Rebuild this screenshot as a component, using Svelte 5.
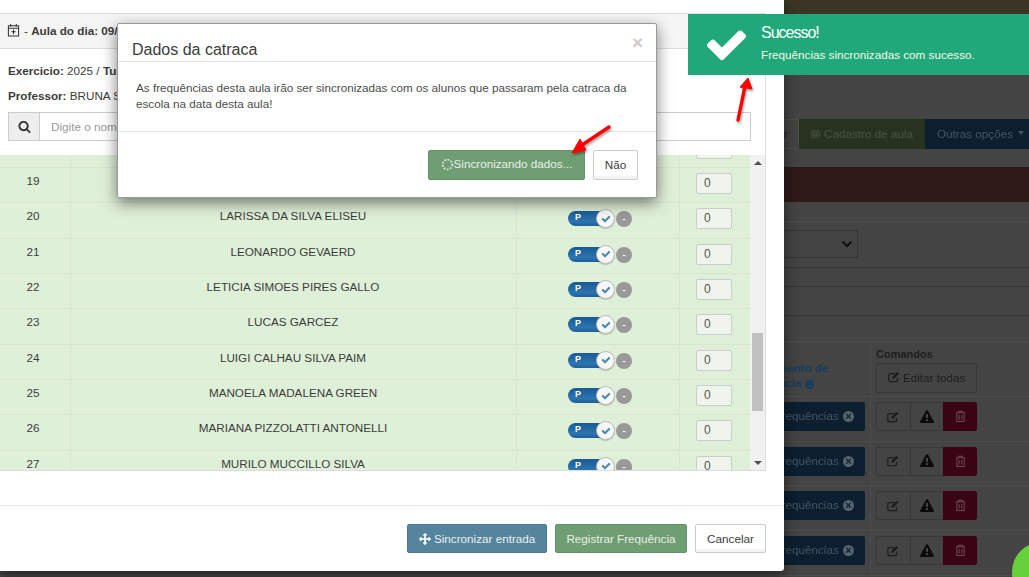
<script>
  const rows = [
    { n: 18, name: '' },
    { n: 19, name: '' },
    { n: 20, name: 'LARISSA DA SILVA ELISEU' },
    { n: 21, name: 'LEONARDO GEVAERD' },
    { n: 22, name: 'LETICIA SIMOES PIRES GALLO' },
    { n: 23, name: 'LUCAS GARCEZ' },
    { n: 24, name: 'LUIGI CALHAU SILVA PAIM' },
    { n: 25, name: 'MANOELA MADALENA GREEN' },
    { n: 26, name: 'MARIANA PIZZOLATTI ANTONELLI' },
    { n: 27, name: 'MURILO MUCCILLO SILVA' }
  ];
  const pageRows = [1, 2, 3, 4];

  const check = 'M1671 566q0-40-28-68l-136-136q-28-28-68-28t-68 28l-656 657-294-295q-28-28-68-28t-68 28l-136 136q-28 28-28 68t28 68l362 362 136 136q28 28 68 28t68-28l136-136 724-724q28-28 28-68z';
  const search = 'M1216 832q0-185-131.5-316.5t-316.5-131.5-316.5 131.5-131.5 316.5 131.5 316.5 316.5 131.5 316.5-131.5 131.5-316.5zm512 832q0 52-38 90t-90 38q-54 0-90-38l-343-342q-179 124-399 124-143 0-273.5-55.5t-225-150-150-225-55.5-273.5 55.5-273.5 150-225 225-150 273.5-55.5 273.5 55.5 225 150 150 225 55.5 273.5q0 220-124 399l343 343q37 37 37 90z';
  const move = 'M1792 896q0 26-19 45l-256 256q-19 19-45 19t-45-19-19-45v-128h-384v384h128q26 0 45 19t19 45-19 45l-256 256q-19 19-45 19t-45-19l-256-256q-19-19-19-45t19-45 45-19h128v-384h-384v128q0 26-19 45t-45 19-45-19l-256-256q-19-19-19-45t19-45l256-256q19-19 45-19t45 19 19 45v128h384v-384h-128q-26 0-45-19t-19-45 19-45l256-256q19-19 45-19t45 19l256 256q19 19 19 45t-19 45-45 19h-128v384h384v-128q0-26 19-45t45-19 45 19l256 256q19 19 19 45z';
  const warning = 'M1024 1375v-190q0-14-9.5-23.5t-22.5-9.5h-192q-13 0-22.5 9.5t-9.5 23.5v190q0 14 9.5 23.5t22.5 9.5h192q13 0 22.5-9.5t9.5-23.5zm-2-374l18-459q0-12-10-19-13-11-24-11h-220q-11 0-24 11-10 7-10 21l17 457q0 10 10 16.5t24 6.5h185q14 0 23.5-6.5t10.5-16.5zm-14-934l768 1408q35 63-2 126-17 29-46.5 46t-63.5 17h-1536q-34 0-63.5-17t-46.5-46q-37-63-2-126l768-1408q17-31 47-49t65-18 65 18 47 49z';
</script>

{#snippet editIcon()}
  <svg class="ico" viewBox="0 0 14 14" width="12" height="12">
    <path d="M11 8v3a1.5 1.5 0 0 1-1.5 1.5h-7A1.5 1.5 0 0 1 1 11V4.500A1.500 1.500 0 0 1 2.500 3H8" fill="none" stroke="currentColor" stroke-width="1.400"/>
    <path d="M5 7l6-6 2 2-6 6H5z" fill="currentColor"/>
  </svg>
{/snippet}

<div class="screen">
  <!-- pagina de fundo, escurecida pelo backdrop -->
  <div class="page">
    <div class="band"></div>
    <div class="toolbar">
      <span class="tb-btn plain">Voltar</span>
      <span class="tb-btn green">
        <svg class="ico" viewBox="0 0 14 14" width="12" height="13">
          <path d="M1 3h12v10H1zM1 6h12M4 1v3M10 1v3M5 6v7M9 6v7M1 9.500h12" fill="none" stroke="currentColor" stroke-width="1.100"/>
        </svg>
        Cadastro de aula
      </span>
      <span class="tb-btn blue">Outras opções <i class="caret"></i></span>
    </div>
    <div class="red-band"></div>
    <div class="select-row">
      <div class="select">
        <svg viewBox="0 0 12 8" width="12" height="8"><path d="M1.500 1.500L6 6l4.500-4.500" fill="none" stroke="#111" stroke-width="2"/></svg>
      </div>
    </div>
    <div class="gap-a"></div>
    <div class="gap-b"></div>
    <div class="gap-c"></div>
    <div class="pg-head">
      <div class="pg-col1">Lançamento de<br />frequência <i class="info">i</i></div>
      <div class="pg-col2">
        <b>Comandos</b>
        <span class="edit-all">{@render editIcon()} Editar todas</span>
      </div>
    </div>
    {#each pageRows as r}
      <div class="pg-row">
        <div class="pg-cell1">
          <span class="freq-btn">Frequências <i class="x-c">×</i></span>
        </div>
        <div class="pg-cell2">
          <div class="group">
            <span class="g-btn">{@render editIcon()}</span>
            <span class="g-btn">
              <svg viewBox="0 0 1792 1792" width="14" height="14"><path d={warning} fill="#0b0b0b"/></svg>
            </span>
            <span class="g-btn del">
              <svg viewBox="0 0 12 14" width="11" height="13"><path d="M1 3h10M4 3V1.200h4V3M2 3v9.500h8V3M4.500 5v5.500M7.500 5v5.500" fill="none" stroke="#6d4a56" stroke-width="1.100"/></svg>
            </span>
          </div>
        </div>
      </div>
    {/each}
  </div>

  <div class="chat-bubble"></div>

  <!-- modal de frequencia -->
  <div class="modal-main">
    <div class="panel">
      <div class="panel-head">
        <svg viewBox="0 0 14 14" width="13" height="14">
          <path d="M1.500 2.500h11v11h-11zM1.500 5h11M4 .5v3M10 .5v3M7 6.500v5M4.500 9h5" fill="none" stroke="#333" stroke-width="1.100"/>
        </svg>
        <span>- <b>Aula do dia: 09/0</b></span>
      </div>
      <div class="panel-body">
        <p><b>Exercicio:</b> 2025 / <b>Turma</b></p>
        <p class="prof"><b>Professor:</b> BRUNA S</p>
        <div class="search">
          <span class="addon">
            <svg viewBox="0 0 1792 1792" width="13" height="13"><path d={search} fill="#333"/></svg>
          </span>
          <span class="search-input">Digite o nome</span>
        </div>
      </div>
      <div class="table-wrap">
        <div class="table">
          <div class="rows">
            {#each rows as row}
              <div class="row">
                <div class="c-n">{row.n}</div>
                <div class="c-name">{row.name}</div>
                <div class="c-sw">
                  <span class="pill">
                    <span class="p">P</span>
                    <span class="knob">
                      <svg viewBox="0 0 1792 1792" width="10" height="10"><path d={check} fill="#4a8aa8"/></svg>
                    </span>
                  </span>
                  <span class="minus">-</span>
                </div>
                <div class="c-in"><span class="num">0</span></div>
              </div>
            {/each}
          </div>
        </div>
        <div class="scrollbar">
          <span class="sb-btn"><i class="up"></i></span>
          <div class="track"><div class="thumb"></div></div>
          <span class="sb-btn"><i class="down"></i></span>
        </div>
      </div>
    </div>
    <div class="main-footer">
      <button class="btn sync">
        <svg viewBox="0 0 1792 1792" width="12" height="12"><path d={move} fill="#fff"/></svg>
        Sincronizar entrada
      </button>
      <button class="btn reg">Registrar Frequência</button>
      <button class="btn cancel">Cancelar</button>
    </div>
  </div>

  <!-- dialogo da catraca -->
  <div class="dialog">
    <div class="d-head">
      <h4>Dados da catraca</h4>
      <span class="close">×</span>
    </div>
    <div class="d-body">
      As frequências desta aula irão ser sincronizadas com os alunos que passaram pela catraca da
      escola na data desta aula!
    </div>
    <div class="d-foot">
      <button class="btn reg loading">
        <svg viewBox="0 0 14 14" width="13" height="13">
          <circle cx="7" cy="7" r="5.200" fill="none" stroke="#dfe9df" stroke-width="1.800" stroke-dasharray="1.800 1.600"/>
        </svg>Sincronizando dados...
      </button>
      <button class="btn nao">Não</button>
    </div>
  </div>

  <!-- notificacao -->
  <div class="toast">
    <svg viewBox="0 0 1792 1792" width="45" height="45"><path d={check} fill="#fff"/></svg>
    <div class="toast-text">
      <div class="t-title">Sucesso!</div>
      <div class="t-msg">Frequências sincronizadas com sucesso.</div>
    </div>
  </div>

  <svg class="arrows" viewBox="0 0 1029 577" width="1029" height="577">
    <path d="M609 127L579 147" stroke="#f00" stroke-width="3.400" stroke-linecap="round"/>
    <path d="M572 153L580 139 586 150z" fill="#f00" stroke="#f00" stroke-linejoin="round"/>
    <path d="M738 120L745 86" stroke="#f00" stroke-width="3.400" stroke-linecap="round"/>
    <path d="M748 78L740 87 752 89z" fill="#f00" stroke="#f00" stroke-linejoin="round"/>
  </svg>
</div>

<style>
  :global(body) {
    margin: 0;
    background: #222;
  }

  .screen {
    position: relative;
    width: 1029px;
    height: 577px;
    overflow: hidden;
    font-family: "Liberation Sans", Arial, sans-serif;
    font-size: 11.700px;
    color: #3c3c3c;
  }

  button {
    font-family: inherit;
  }

  .ico {
    vertical-align: -1px;
  }

  /* fundo */
  .page {
    height: 577px;
    background: #444;
    filter: blur(0.5px);
    color: #1d1d1d;
  }

  .band {
    height: 14px;
    background: #3a3524;
  }

  .toolbar {
    display: flex;
    justify-content: flex-end;
    margin-top: 105px;
    height: 30px;
  }

  .tb-btn {
    display: flex;
    align-items: center;
    gap: 4px;
    padding: 0 10px 2px;
    box-sizing: border-box;
    white-space: nowrap;
  }

  .tb-btn.plain {
    border: 1px solid #4e4e4e;
    color: #1f1f1f;
  }

  .tb-btn.green {
    width: 126px;
    padding: 0 12px 2px;
    background: #26341f;
    color: #4c5448;
  }

  .tb-btn.blue {
    width: 104px;
    padding: 0 12px 2px;
    background: #0c1f2f;
    color: #47545f;
  }

  .caret {
    border-top: 4px solid #47545f;
    border-left: 3.500px solid transparent;
    border-right: 3.500px solid transparent;
    margin-left: 1px;
  }

  .red-band {
    margin-top: 18px;
    height: 35px;
    background: #2e1a19;
  }

  .select-row {
    margin-top: 19px;
    height: 46px;
    box-sizing: border-box;
    border-top: 1px solid #4c4c4c;
    padding-top: 8px;
  }

  .select {
    width: 858px;
    height: 28px;
    box-sizing: border-box;
    border: 1px solid #363636;
    display: flex;
    align-items: center;
    justify-content: flex-end;
    padding-right: 4px;
  }

  .gap-a {
    height: 19px;
    border-top: 1px solid #353535;
    box-sizing: border-box;
  }

  .gap-b {
    height: 29px;
    border-top: 1px solid #353535;
    box-sizing: border-box;
  }

  .gap-c {
    height: 26px;
    border-top: 1px solid #353535;
    box-sizing: border-box;
  }

  .pg-head {
    display: grid;
    grid-template-columns: 870px 1fr;
    height: 56px;
    box-sizing: border-box;
    border-top: 1px solid #4c4c4c;
    border-bottom: 1px solid #4c4c4c;
  }

  .pg-col1 {
    padding: 18px 0 0 743px;
    font-weight: bold;
    color: #153e63;
    line-height: 15px;
  }

  .info {
    display: inline-block;
    width: 9px;
    height: 9px;
    border-radius: 50%;
    background: #153e63;
    color: #444;
    font: bold 8px/9px "Liberation Serif", serif;
    text-align: center;
  }

  .pg-col2 {
    border-left: 1px solid #4c4c4c;
    padding: 5px 0 0 5px;
    font-size: 11px;
  }

  .pg-col2 b {
    display: block;
    line-height: 14px;
  }

  .edit-all {
    display: inline-block;
    box-sizing: border-box;
    width: 101px;
    height: 30px;
    margin-top: 2px;
    border: 1px solid #383838;
    border-radius: 2px;
    font-size: 11.700px;
    line-height: 28px;
    text-align: center;
  }

  .pg-row {
    display: grid;
    grid-template-columns: 870px 1fr;
    height: 44.700px;
    box-sizing: border-box;
    border-bottom: 1px solid #4c4c4c;
  }

  .pg-cell1 {
    display: flex;
    justify-content: flex-end;
    padding: 5px 5px 0 0;
  }

  .freq-btn {
    height: 29px;
    box-sizing: border-box;
    padding: 0 11px 0 0;
    background: #0b1f30;
    color: #47545f;
    border-radius: 2px;
    line-height: 27px;
    width: 122px;
    text-align: right;
    white-space: nowrap;
  }

  .x-c {
    display: inline-block;
    width: 11px;
    height: 11px;
    border-radius: 50%;
    background: #56636d;
    color: #0b1f30;
    font: bold 11px/11px "Liberation Sans", sans-serif;
    text-align: center;
    margin-left: 1px;
  }

  .pg-cell2 {
    border-left: 1px solid #4c4c4c;
    padding: 5px 0 0 5px;
  }

  .group {
    display: flex;
    width: 101px;
    height: 29px;
  }

  .g-btn {
    flex: 1;
    display: flex;
    align-items: center;
    justify-content: center;
    border: 1px solid #383838;
    margin-left: -1px;
  }

  .g-btn:first-child {
    margin-left: 0;
    border-radius: 2px 0 0 2px;
  }

  .g-btn.del {
    flex: 0 0 32px;
    background: #3a0414;
    border-color: #3a0414;
    border-radius: 0 2px 2px 0;
  }

  .chat-bubble {
    position: absolute;
    left: 1012px;
    top: 542px;
    width: 60px;
    height: 60px;
    border-radius: 50%;
    background: #66d13a;
  }

  /* modal principal */
  .modal-main {
    position: absolute;
    left: 0;
    top: 0;
    width: 784px;
    height: 571px;
    background: #fff;
    box-shadow: 0 5px 15px rgba(0, 0, 0, 0.5);
    border-radius: 0 0 3px 0;
  }

  .panel {
    width: 766px;
    box-sizing: border-box;
    margin-top: 13px;
    border-top: 1px solid #ddd;
    border-right: 1px solid #ddd;
    border-bottom: 1px solid #ddd;
  }

  .panel-head {
    height: 35px;
    box-sizing: border-box;
    display: flex;
    align-items: center;
    gap: 4px;
    padding: 0 0 2px 7px;
    background: #f5f5f5;
    border-bottom: 1px solid #ddd;
  }

  .panel-body {
    padding: 15px 0 14px 8px;
  }

  .panel-body p {
    margin: 0 0 11px;
    line-height: 14px;
    white-space: nowrap;
  }

  .panel-body p.prof {
    margin-bottom: 9px;
  }

  .search {
    display: flex;
    width: 743px;
    height: 29px;
    box-sizing: border-box;
    border: 1px solid #ccc;
  }

  .addon {
    width: 30px;
    display: flex;
    align-items: center;
    justify-content: center;
    background: #eee;
    border-right: 1px solid #ccc;
  }

  .search-input {
    padding-left: 11px;
    line-height: 27px;
    color: #999;
  }

  .table-wrap {
    display: flex;
    height: 315px;
  }

  .table {
    flex: 1;
    overflow: hidden;
    background: #dff0d8;
  }

  .rows {
    margin-top: -22.300px;
  }

  .row {
    display: grid;
    grid-template-columns: 71px 446px 163px 1fr;
    height: 35.330px;
    box-sizing: border-box;
    border-bottom: 1px solid #d9e4d4;
    text-align: center;
  }

  .c-n,
  .c-name {
    padding-top: 6px;
    line-height: 14px;
    border-right: 1px solid #d9e4d4;
  }

  .c-n {
    padding-right: 4px;
  }

  .c-name {
    padding-right: 1px;
  }

  .c-sw {
    display: flex;
    gap: 3px;
    padding: 8px 0 0 51px;
    border-right: 1px solid #d9e4d4;
  }

  .pill {
    position: relative;
    width: 38px;
    height: 15px;
    border-radius: 8px 0 0 8px;
    background: linear-gradient(#1a5a94 0%, #2c74b0 70%, #1f5f98 100%);
    display: block;
    margin-right: 7px;
  }

  .p {
    position: absolute;
    left: 7px;
    top: 1px;
    color: #fff;
    font-size: 9px;
    font-weight: bold;
    line-height: 11px;
  }

  .knob {
    position: absolute;
    left: 28px;
    top: -2px;
    width: 19px;
    height: 19px;
    box-sizing: border-box;
    border-radius: 50%;
    background: #f7f7f7;
    border: 1px solid #bbb;
    display: flex;
    align-items: center;
    justify-content: center;
    box-shadow: 0 1px 1px rgba(0, 0, 0, 0.2);
  }

  .minus {
    width: 16px;
    height: 16px;
    border-radius: 50%;
    background: #999;
    color: #fff;
    font-size: 9px;
    font-weight: bold;
    line-height: 16px;
  }

  .c-in {
    padding: 5px 0 0 16px;
  }

  .num {
    display: block;
    width: 36px;
    height: 21px;
    box-sizing: border-box;
    border: 1px solid #ccc;
    border-radius: 2px;
    background: #eff5ec;
    text-align: left;
    padding-left: 7px;
    line-height: 19px;
    font-size: 12px;
    color: #555;
  }

  .scrollbar {
    width: 15px;
    background: #f1f1f1;
    display: flex;
    flex-direction: column;
  }

  .sb-btn {
    height: 15px;
    flex: none;
    display: flex;
    align-items: center;
    justify-content: center;
  }

  .up,
  .down {
    border-left: 4px solid transparent;
    border-right: 4px solid transparent;
  }

  .up {
    border-bottom: 4px solid #505050;
  }

  .down {
    border-top: 4px solid #505050;
  }

  .track {
    flex: 1;
    padding: 163px 2px 0;
  }

  .thumb {
    height: 78px;
    background: #c1c1c1;
  }

  .main-footer {
    margin-top: 34px;
    height: 66px;
    box-sizing: border-box;
    border-top: 1px solid #e5e5e5;
    display: flex;
    justify-content: flex-end;
    align-items: flex-start;
    gap: 8px;
    padding: 18px 18px 0 0;
  }

  .btn {
    height: 29px;
    box-sizing: border-box;
    border-radius: 2px;
    font-size: 11.700px;
    padding: 0 11px;
    border: 1px solid;
    color: #fff;
    white-space: nowrap;
  }

  .sync {
    width: 140px;
    background: #55859c;
    border-color: #4a7a91;
    color: #e8eff3;
    padding: 0;
  }

  .sync svg {
    vertical-align: -2px;
  }

  .reg {
    width: 132px;
    background: #6f9e73;
    border-color: #64926a;
    color: #e8f0e8;
    padding: 0;
  }

  .cancel {
    width: 71px;
    background: #fff;
    border-color: #ccc;
    color: #3c3c3c;
    padding: 0;
    box-shadow: inset 0 -3px 0 #f4f4f4;
  }

  /* dialogo */
  .dialog {
    position: absolute;
    left: 117px;
    top: 23px;
    width: 540px;
    height: 175px;
    box-sizing: border-box;
    background: #fff;
    border: 1px solid #999;
    border-radius: 2px;
    box-shadow: 0 5px 15px rgba(0, 0, 0, 0.5);
  }

  .d-head {
    height: 38px;
    box-sizing: border-box;
    padding: 16px 13px 0 14px;
    border-bottom: 1px solid #e5e5e5;
    display: flex;
    justify-content: space-between;
  }

  .d-head h4 {
    margin: 0;
    font-size: 16px;
    font-weight: normal;
    line-height: 20px;
    color: #3c3c3c;
  }

  .close {
    margin-top: -7px;
    font-size: 19px;
    font-weight: bold;
    line-height: 20px;
    color: #ccc;
  }

  .d-body {
    height: 70px;
    box-sizing: border-box;
    padding: 18px 18px 0;
    line-height: 16px;
    color: #4d4d4d;
    border-bottom: 1px solid #e5e5e5;
    width: 100%;
  }

  .d-foot {
    display: flex;
    justify-content: flex-end;
    gap: 8px;
    padding: 18px 18px 0 0;
  }

  .loading {
    width: 157px;
    height: 30px;
    padding-bottom: 3px;
  }

  .loading svg {
    vertical-align: -3px;
  }

  .nao {
    width: 45px;
    height: 30px;
    background: #fff;
    border-color: #ccc;
    color: #3c3c3c;
    padding: 0 0 2px;
    box-shadow: inset 0 -3px 0 #f4f4f4;
  }

  /* notificacao */
  .toast {
    position: absolute;
    left: 688px;
    top: 14px;
    width: 341px;
    height: 61px;
    background: #20a87b;
    display: flex;
    align-items: center;
    gap: 12px;
    padding-left: 16px;
    box-sizing: border-box;
    color: #fff;
  }

  .toast-text {
    align-self: flex-start;
  }

  .t-title {
    margin-top: 10px;
    font-size: 16px;
    line-height: 18px;
    letter-spacing: -1px;
  }

  .t-msg {
    margin-top: 6px;
    line-height: 14px;
    color: #f4f8e8;
  }

  .arrows {
    position: absolute;
    left: 0;
    top: 0;
    pointer-events: none;
    filter: drop-shadow(1px 2px 1px rgba(0, 0, 0, 0.35));
  }
</style>
